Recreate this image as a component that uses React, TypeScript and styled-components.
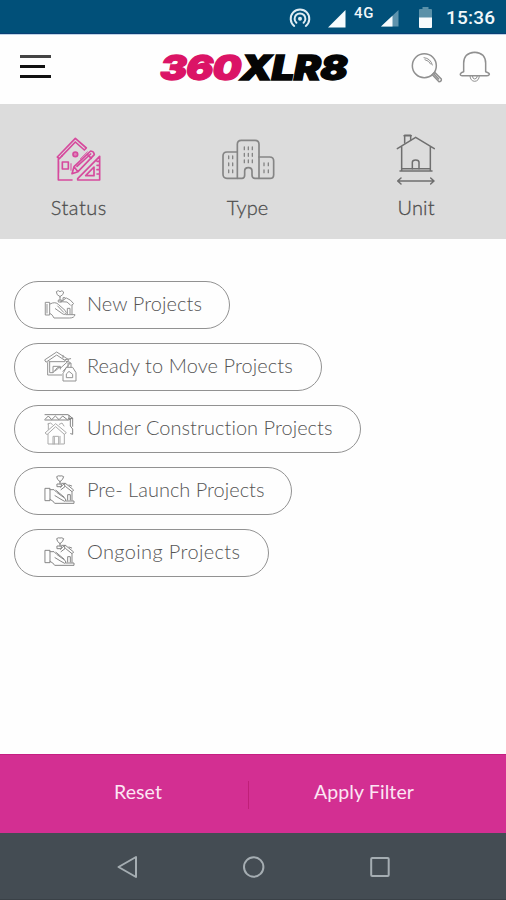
import React from "react";
import styled, { createGlobalStyle } from "styled-components";

const GlobalStyle = createGlobalStyle`
  * { box-sizing: border-box; }
  body { margin: 0; background: #fff; }
  button { border: 0; padding: 0; background: none; font: inherit; color: inherit; }
  svg { display: block; flex: none; }
`;

const Screen = styled.div`
  width: 506px;
  height: 900px;
  display: flex;
  flex-direction: column;
  overflow: hidden;
  background: #fefefe;
  font-family: Lato, "Open Sans", sans-serif;
`;

const StatusBar = styled.div`
  height: 34px;
  flex: none;
  display: flex;
  align-items: flex-start;
  justify-content: flex-end;
  padding-right: 10px;
  background: #015079;
  border-bottom: 1px solid #0a3f75;
  color: #f1f7fa;
  font-family: Roboto, sans-serif;
`;

const Network = styled.span`
  font-size: 15px;
  font-weight: 500;
  line-height: 16px;
  margin: 5px 5px 0 8px;
  width: 22px;
  letter-spacing: 0.6px;
`;

const Clock = styled.time`
  font-size: 19px;
  font-weight: 500;
  line-height: 22px;
  margin: 7px 0 0 14px;
  width: 50px;
  letter-spacing: 0.2px;
  white-space: nowrap;
`;

const StatusGlyph = styled.div<{ $top: number; $gap?: number }>`
  margin-top: ${(p) => p.$top}px;
  margin-left: ${(p) => p.$gap ?? 0}px;
`;

const Header = styled.header`
  height: 70px;
  flex: none;
  display: grid;
  grid-template-columns: 160px 190px 1fr;
  border-top: 1px solid #bfd3e6;
  background: #fefefe;
`;

const MenuButton = styled.button`
  display: flex;
  flex-direction: column;
  align-items: flex-start;
  gap: 7px;
  padding: 20px 0 0 20px;
`;

const MenuLine = styled.span<{ $width: number; $color: string }>`
  height: 3px;
  width: ${(p) => p.$width}px;
  background: ${(p) => p.$color};
`;

const Logo = styled.div`
  font-family: Inter, sans-serif;
  font-weight: 900;
  font-style: italic;
  font-size: 34px;
  line-height: 41px;
  padding-top: 12px;
  white-space: nowrap;
  color: #050505;
  transform-origin: 0 0;
  transform: scaleX(1.195);
  letter-spacing: -0.6px;
  -webkit-text-stroke: 1.3px currentColor;
`;

const LogoAccent = styled.span`
  color: #db1466;
  letter-spacing: -0.9px;
`;

const HeaderActions = styled.div`
  display: flex;
  align-items: flex-start;
  gap: 16px;
  padding: 16px 0 0 61px;
`;

const Tabs = styled.nav`
  height: 135px;
  flex: none;
  display: grid;
  grid-template-columns: 157px 181px 156px;
  background: #dcdcdc;
`;

const Tab = styled.button`
  display: flex;
  flex-direction: column;
  align-items: center;
`;

const TabIcon = styled.div`
  height: 91px;
  display: flex;
  align-items: flex-start;
  padding-top: 26px;
`;

const TabLabel = styled.span<{ $spacing: number }>`
  font-size: 20px;
  font-weight: 300;
  line-height: 24px;
  color: #4e4e4e;
  -webkit-text-stroke: 0.3px currentColor;
  letter-spacing: ${(p) => p.$spacing}px;
  margin-right: -${(p) => p.$spacing}px;
`;

const Options = styled.main`
  flex: 1;
  display: flex;
  flex-direction: column;
  align-items: flex-start;
  gap: 14px;
  padding: 42px 0 0 14px;
`;

const Chip = styled.button<{ $width: number }>`
  width: ${(p) => p.$width}px;
  height: 48px;
  display: flex;
  align-items: flex-start;
  border: 1px solid #929292;
  border-radius: 24px;
  padding: 7px 0 0 29px;
`;

const ChipLabel = styled.span<{ $spacing: number }>`
  font-size: 20px;
  font-weight: 300;
  line-height: 24px;
  margin: 2px 0 0 10px;
  color: #555;
  white-space: nowrap;
  letter-spacing: ${(p) => p.$spacing}px;
`;

const ActionBar = styled.div`
  height: 79px;
  flex: none;
  display: flex;
  align-items: flex-start;
  background: #d32f92;
  border-top: 1px solid #c51f82;
  color: #fce6f4;
  font-size: 19.5px;
  line-height: 24px;
`;

const Action = styled.button<{ $width: number; $shift: number }>`
  width: ${(p) => p.$width}px;
  padding: 25px 0 0 ${(p) => p.$shift}px;
  text-align: left;
  white-space: nowrap;
  letter-spacing: 0.1px;
`;

const Divider = styled.span`
  width: 1px;
  height: 28px;
  margin-top: 26px;
  background: #c01f78;
`;

const NavBar = styled.div`
  height: 67px;
  flex: none;
  display: flex;
  gap: 105px;
  padding: 22px 0 0 116px;
  background: #444c53;
  border-bottom: 1px solid #3a4147;
`;

const line = {
  fill: "none",
  strokeLinecap: "round" as const,
  strokeLinejoin: "round" as const,
};

const HotspotIcon = () => (
  <svg width="22" height="20" viewBox="0 0 22 20" {...line} stroke="#dfecf3" strokeWidth="2">
    <path d="M5.2 18A9.3 9.3 0 1 1 16.8 18" />
    <path d="M7.4 14.8A5.4 5.4 0 1 1 14.6 14.8" />
    <circle cx="11" cy="10.7" r="2" fill="#dfecf3" stroke="none" />
  </svg>
);

const SignalIcon = () => (
  <svg width="18" height="18" viewBox="0 0 18 18">
    <path d="M17.5 0V17.5H0Z" fill="#f7fbfd" />
  </svg>
);

const WeakSignalIcon = () => (
  <svg width="18" height="17" viewBox="0 0 18 17">
    <path d="M17.5 0V16.5H0Z" fill="#5f93ad" />
    <path d="M11.5 5.7V16.5H0Z" fill="#f7fbfd" />
  </svg>
);

const BatteryIcon = () => (
  <svg width="13" height="21" viewBox="0 0 13 21">
    <path d="M1 2H3.5V0H9.5V2H12Q13 2 13 3V11H0V3Q0 2 1 2Z" fill="#5a91a9" />
    <path d="M0 10.5H13V20Q13 21 12 21H1Q0 21 0 20Z" fill="#f7fbfd" />
  </svg>
);

const SearchIcon = () => (
  <svg width="32" height="32" viewBox="474 50 96 96" {...line} stroke="#909090" strokeWidth="4.5">
    <circle cx="514" cy="94" r="36" />
    <path d="M513 70Q533 72 538 92M516 76Q529 79 533 89" strokeWidth="3" />
    <path d="M538 121L545 114L565 134Q566 142 558 142ZM545 121L557 134" />
  </svg>
);

const BellIcon = () => (
  <svg width="32" height="32" viewBox="617 50 96 96" {...line} stroke="#909090" strokeWidth="4.5">
    <path d="M631 112V87Q631 56 664 54Q697 56 697 87V112Q708 115 708 120Q707 124 701 124H627Q620 124 621 119Q623 114 631 112Z" />
    <path d="M650 125Q651 140 664 141Q677 140 678 125M657 125Q658 134 664 134Q671 134 672 125" strokeWidth="3" />
  </svg>
);

const StatusIcon = () => (
  <svg width="48" height="55" viewBox="77 18 144 165" {...line} stroke="#d64a9d" strokeWidth="5">
    <path d="M84 99L138 43L171 72L165 78L138 54L90 104Z" />
    <path d="M87 105V168H128M98 96V95" />
    <circle cx="138" cy="91" r="7" fill="#df83b9" />
    <rect x="99" y="114" width="18" height="21" />
    <path d="M128 149L134 128L184 81Q194 82 195 92L146 143ZM134 128L146 143M143 127L184 90M174 91L186 103" />
    <path d="M145 168H211V97L145 164ZM169 155H194V129ZM203 112H209M203 124H209M203 137H209M203 150H209" />
    <path d="M125 119V139M88 113V145M153 105L174 84" strokeWidth="3" />
  </svg>
);

const TypeIcon = () => (
  <svg width="54" height="55" viewBox="61 18 162 165" {...line} stroke="#858585" strokeWidth="5">
    <path d="M110 84H79Q67 84 67 96V151Q67 163 79 163H124Q132 163 132 153V141Q132 131 143 131Q154 131 154 141V153Q154 163 163 163H208Q219 163 219 152V111Q219 99 207 99H175" />
    <path d="M110 163V61Q110 49 122 49H163Q175 49 175 61V163" />
    <path
      d="M131 69V77M143 69V77M155 69V77M131 88V97M143 88V97M155 88V97M131 108V116M143 108V116M155 108V116M84 96V104M96 96V104M84 117V125M96 117V125M84 138V146M96 138V146M190 117V125M203 117V125M190 138V146M203 138V146"
      strokeWidth="4"
    />
  </svg>
);

const UnitIcon = () => (
  <svg width="40" height="55" viewBox="80 18 120 165" {...line} stroke="#6f6f6f" strokeWidth="4.5">
    <path d="M84 74L139 40L195 74M97 68V140M183 68V140M97 134H183M92 141H188" />
    <path d="M106 57V34H124V47M104 35H126" />
    <path d="M129 134V115Q129 108 139 108Q149 108 149 115V134" />
    <path d="M86 171H193M95 162L85 171L95 180M184 162L194 171L184 180" />
  </svg>
);

const HandHomeIcon = () => (
  <svg width="33" height="32" viewBox="130 58 99 96" {...line} stroke="#929292" strokeWidth="3">
    <path d="M135 98H147V136H135ZM139 104V130" />
    <path d="M148 103Q164 94 174 105L193 122Q200 129 194 134Q188 136 181 129L164 117" />
    <path d="M148 131Q156 135 160 145H207Q221 145 223 135H196M171 109L189 128" />
    <path d="M181 96L197 85Q210 89 219 102L214 106M214 106V134M180 96L199 97L209 106M200 132V116H208V132M187 92V84H193" />
    <path d="M178 81Q166 76 167 66Q173 60 178 66Q184 60 189 67Q190 75 178 81ZM178 82V92M174 91H183V97H174Z" />
  </svg>
);

const ReadyIcon = () => (
  <svg width="33" height="32" viewBox="130 244 99 96" {...line} stroke="#929292" strokeWidth="3">
    <path d="M133 270L168 247L204 270L200 277L168 256L137 277ZM141 279V316H183M147 278V309H157V290H179V298M187 257V265M193 270L210 267" />
    <path d="M157 309L170 294H181L203 274L209 280L187 305M163 304L173 296M145 276H192" />
    <path d="M189 308L197 293H216L226 309V334H187V312ZM202 291V280H211V292" />
    <path d="M206 306L216 314V324H197V314Z" />
  </svg>
);

const CraneHomeIcon = () => (
  <svg width="33" height="32" viewBox="130 52 99 96" {...line} stroke="#858585" strokeWidth="3">
    <path d="M133 57H202L216 68H203M133 73H204L216 67V92M209 68V91L216 100V116L210 114M133 71L143 61L153 72L164 61L175 72L186 61L200 72M205 59V72" />
    <g stroke="#aaa">
      <path d="M134 111L165 84L197 111L191 116L165 93L140 116ZM142 116V145H191V116M142 85L149 82L155 86M176 86L184 82L190 91M143 83V101" />
      <path d="M157 145V122H174V145M161 145V125M178 122V142" />
    </g>
  </svg>
);

const PlantHomeIcon = () => (
  <svg width="33" height="32" viewBox="130 242 99 96" {...line} stroke="#868686" strokeWidth="3">
    <path d="M134 282H148V319H134ZM148 286H160L168 294L193 312Q199 318 192 321L181 315L163 304M148 315Q158 319 162 327H220V320H195M166 288L190 308" />
    <path d="M179 279L193 266L219 287L214 292L194 276L181 286M214 292V318M201 317V301H209V317M183 267H192V276M205 272L213 275" />
    <path d="M178 262Q168 256 168 247Q173 243 178 245Q183 243 189 247Q188 256 178 262ZM178 262V269M170 269H182V277H170Z" />
  </svg>
);

const options = [
  { label: "New Projects", width: 216, spacing: 0.08, Icon: HandHomeIcon },
  { label: "Ready to Move Projects", width: 308, spacing: 0.08, Icon: ReadyIcon },
  { label: "Under Construction Projects", width: 347, spacing: 0.03, Icon: CraneHomeIcon },
  { label: "Pre- Launch Projects", width: 278, spacing: 0, Icon: PlantHomeIcon },
  { label: "Ongoing Projects", width: 255, spacing: 0.36, Icon: PlantHomeIcon },
];

export default function App() {
  return (
    <Screen>
      <GlobalStyle />
      <StatusBar>
        <StatusGlyph $top={8}><HotspotIcon /></StatusGlyph>
        <StatusGlyph $top={10} $gap={17}><SignalIcon /></StatusGlyph>
        <Network>4G</Network>
        <StatusGlyph $top={10}><WeakSignalIcon /></StatusGlyph>
        <StatusGlyph $top={7} $gap={20}><BatteryIcon /></StatusGlyph>
        <Clock>15:36</Clock>
      </StatusBar>
      <Header>
        <MenuButton aria-label="Menu">
          <MenuLine $width={31} $color="#444" />
          <MenuLine $width={25} $color="#111" />
          <MenuLine $width={31} $color="#111" />
        </MenuButton>
        <Logo><LogoAccent>360</LogoAccent>XLR8</Logo>
        <HeaderActions>
          <SearchIcon />
          <BellIcon />
        </HeaderActions>
      </Header>
      <Tabs>
        <Tab>
          <TabIcon><StatusIcon /></TabIcon>
          <TabLabel $spacing={0.5}>Status</TabLabel>
        </Tab>
        <Tab>
          <TabIcon><TypeIcon /></TabIcon>
          <TabLabel $spacing={0.1}>Type</TabLabel>
        </Tab>
        <Tab>
          <TabIcon><UnitIcon /></TabIcon>
          <TabLabel $spacing={0.2}>Unit</TabLabel>
        </Tab>
      </Tabs>
      <Options>
        {options.map(({ label, width, spacing, Icon }) => (
          <Chip key={label} $width={width}>
            <Icon />
            <ChipLabel $spacing={spacing}>{label}</ChipLabel>
          </Chip>
        ))}
      </Options>
      <ActionBar>
        <Action $width={248} $shift={114}>Reset</Action>
        <Divider />
        <Action $width={257} $shift={65}>Apply Filter</Action>
      </ActionBar>
      <NavBar>
        <svg width="22" height="24" viewBox="0 0 22 24" {...line} stroke="#a5adb2" strokeWidth="2">
          <path d="M2.5 12L20 2V22Z" />
        </svg>
        <svg width="22" height="24" viewBox="0 0 22 24" {...line} stroke="#a5adb2" strokeWidth="2">
          <circle cx="10.7" cy="12" r="9.7" />
        </svg>
        <svg width="22" height="24" viewBox="0 0 22 24" {...line} stroke="#a5adb2" strokeWidth="2">
          <rect x="1.2" y="3" width="17.5" height="18" rx="1" />
        </svg>
      </NavBar>
    </Screen>
  );
}
